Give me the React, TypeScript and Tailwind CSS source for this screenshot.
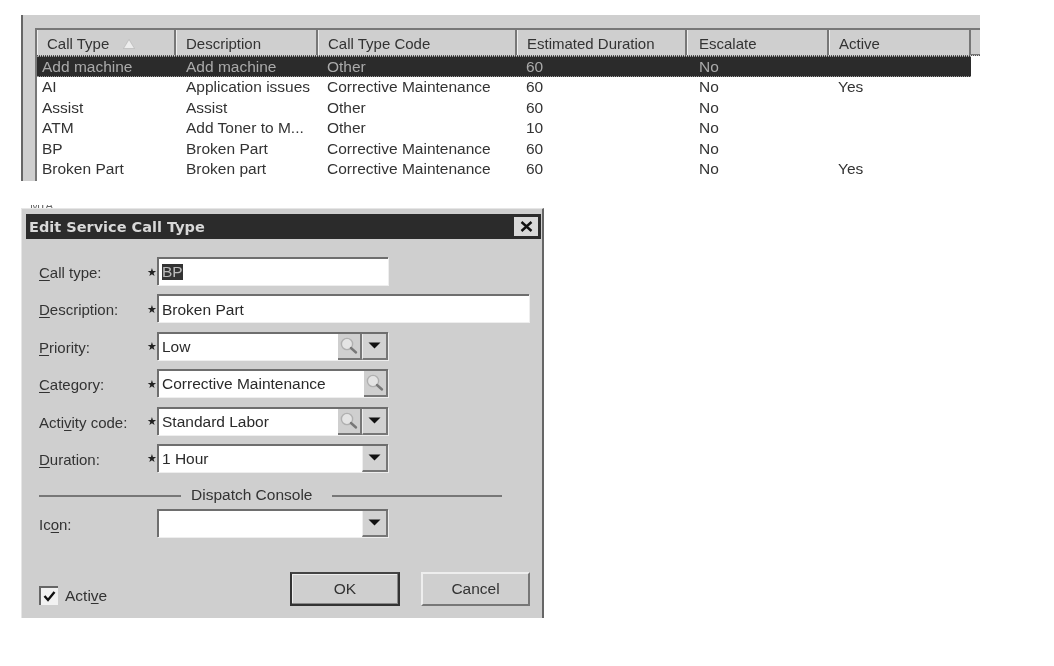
import React from "react";

const cols = ["w-[139px]", "w-[142px]", "w-[199px]", "w-[170px]", "w-[142px]", "w-[142px]"];
const headers = ["Call Type", "Description", "Call Type Code", "Estimated Duration", "Escalate", "Active"];
const rows = [
  ["Add machine", "Add machine", "Other", "60", "No", ""],
  ["AI", "Application issues", "Corrective Maintenance", "60", "No", "Yes"],
  ["Assist", "Assist", "Other", "60", "No", ""],
  ["ATM", "Add Toner to M...", "Other", "10", "No", ""],
  ["BP", "Broken Part", "Corrective Maintenance", "60", "No", ""],
  ["Broken Part", "Broken part", "Corrective Maintenance", "60", "No", "Yes"],
];

function Mnemonic({ pre, u, post }: { pre: string; u: string; post: string }) {
  return (
    <span>
      {pre}
      <span className="underline underline-offset-2">{u}</span>
      {post}
    </span>
  );
}

function SearchBtn() {
  return (
    <div className="w-[24px] h-full bg-[#cfcfcf] border-r-2 border-b-2 border-[#777] flex items-center justify-center shrink-0">
      <svg width="20" height="20" viewBox="0 0 20 20">
        <circle cx="8" cy="8" r="5.6" fill="#e4e4e4" stroke="#b0b0b0" strokeWidth="1.4" />
        <path d="M12 12l5 4.5" stroke="#777" strokeWidth="2.4" strokeLinecap="round" />
      </svg>
    </div>
  );
}

function DropBtn() {
  return (
    <div className="w-[26px] h-full bg-[#d2d2d2] border-l border-l-[#eee] border-r-2 border-b-2 border-[#777] flex items-center justify-center shrink-0">
      <svg width="13" height="7" viewBox="0 0 13 7">
        <path d="M0.5 0.5h12L6.5 6.5z" fill="#111" />
      </svg>
    </div>
  );
}

function Field({
  label,
  star = true,
  value,
  width,
  search,
  drop,
  sel,
}: {
  label: React.ReactNode;
  star?: boolean;
  value?: string;
  width: string;
  search?: boolean;
  drop?: boolean;
  sel?: boolean;
}) {
  return (
    <div className="flex items-center h-[28px]">
      <div className="w-[109px] shrink-0 pl-[1px] text-[#333] text-[15px] pt-[3px] whitespace-nowrap">{label}</div>
      <div className="w-[10px] shrink-0 text-[#222] text-[11px] pt-[2px]">{star ? "★" : ""}</div>
      <div className={`${width} h-full flex items-stretch bg-white border-t-2 border-l-2 border-[#6e6e6e] shadow-[1px_1px_0_#eee]`}>
        <div className="flex-1 min-w-0 pl-[3px] flex items-center text-[#2a2a2a] whitespace-nowrap">
          {sel ? <span className="bg-[#333] text-[#bbb] leading-[16px]">{value}</span> : value}
        </div>
        {search && <SearchBtn />}
        {drop && <DropBtn />}
      </div>
    </div>
  );
}

export default function App() {
  return (
    <div
      className="w-[1054px] h-[666px] bg-white overflow-hidden pt-[15px] pl-[21px] text-[15.5px] leading-none text-[#333] blur-[0.7px]"
      style={{ fontFamily: '"Liberation Sans", Arial, sans-serif' }}
    >
      {/* list panel */}
      <div className="w-[959px] h-[166px] bg-[#cfcfcf] border-l-2 border-[#666] pt-[13px] pl-[12px] overflow-hidden">
        <div className="border-t-2 border-l-2 border-[#777] bg-white h-full">
          <div className="flex h-[26px] bg-[#cfcfcf] border-b border-dotted border-[#555] text-[15px]">
            {headers.map((h, i) => (
              <div key={h} className={`${cols[i]} shrink-0 h-full border-r-2 border-[#777] border-l border-l-[#eee] pt-[2px] flex items-center gap-[14px] ${i === 4 ? "pl-[11px]" : "pl-[9px]"}`}>
                {h}
                {i === 0 && (
                  <svg width="12" height="10" viewBox="0 0 12 10">
                    <path d="M6 0.5L11.5 9.5H0.5z" fill="#ededed" stroke="#aaa" strokeWidth="0.5" />
                  </svg>
                )}
              </div>
            ))}
            <div className="flex-1 border-b border-[#777]" />
          </div>
          {rows.map((r, ri) => (
            <div
              key={ri}
              className={`flex h-[20.5px] items-center ${ri === 0 ? "bg-[#2b2b2b] text-[#aaa] w-[934px] border-y border-dotted border-[#999]" : ""}`}
            >
              {r.map((c, i) => (
                <div key={i} className={`${cols[i]} shrink-0 whitespace-nowrap ${i === 0 ? "pl-[5px]" : i === 4 ? "pl-[12px]" : i === 1 ? "pl-[10px]" : "pl-[9px]"}`}>
                  {c}
                </div>
              ))}
            </div>
          ))}
        </div>
      </div>

      {/* clipped line of text behind the dialog */}
      <div className="h-[27px] overflow-hidden flex items-end pl-[9px]">
        <span className="h-[3px] overflow-hidden text-[#666] text-[12px] leading-[3px] tracking-[1px]">MIA</span>
      </div>

      {/* dialog */}
      <div className="w-[523px] h-[410px] bg-[#cfcfcf] border-r-2 border-[#666] border-l border-l-[#e6e6e6] border-t border-t-[#e6e6e6] flex flex-col">
        <div className="mt-[5px] ml-[4px] mr-[1px] h-[25px] shrink-0 bg-[#2b2b2b] flex items-center justify-between pl-[3px] pr-[3px]">
          <span className="text-[#d8d8d8] font-bold text-[14.5px] pt-[2px]" style={{ fontFamily: '"DejaVu Sans", sans-serif' }}>
            Edit Service Call Type
          </span>
          <div className="w-[24px] h-[19px] bg-[#d8d8d8] flex items-center justify-center">
            <svg width="13" height="11" viewBox="0 0 13 11">
              <path d="M1.5 1l10 9M11.5 1l-10 9" stroke="#111" strokeWidth="2.4" />
            </svg>
          </div>
        </div>

        <div className="pl-[16px] pt-[18px] flex flex-col gap-[9.4px]">
          <Field label={<Mnemonic pre="" u="C" post="all type:" />} value="BP" width="w-[231px]" sel />
          <Field label={<Mnemonic pre="" u="D" post="escription:" />} value="Broken Part" width="w-[372px]" />
          <Field label={<Mnemonic pre="" u="P" post="riority:" />} value="Low" width="w-[231px]" search drop />
          <Field label={<Mnemonic pre="" u="C" post="ategory:" />} value="Corrective Maintenance" width="w-[231px]" search />
          <Field label={<Mnemonic pre="Acti" u="v" post="ity code:" />} value="Standard Labor" width="w-[231px]" search drop />
          <Field label={<Mnemonic pre="" u="D" post="uration:" />} value="1 Hour" width="w-[231px]" drop />
        </div>

        <div className="pl-[17px] h-[37px] w-[480px] shrink-0 flex items-center gap-[10px] pt-[8px]">
          <div className="w-[142px] h-[2px] bg-[#777] mt-[4px]" />
          <span className="whitespace-nowrap">Dispatch Console</span>
          <div className="flex-1 h-[2px] bg-[#777] ml-[10px] mt-[4px]" />
        </div>

        <div className="pl-[16px]">
          <Field label={<Mnemonic pre="Ic" u="o" post="n:" />} star={false} width="w-[231px]" drop />
        </div>

        <div className="flex items-end justify-between pl-[17px] pr-[12px] mt-[35px]">
          <div className="flex items-center gap-[7px] mb-[1px]">
            <div className="w-[19px] h-[19px] bg-[#f2f2f2] border-t-2 border-l-2 border-[#666] flex items-center justify-center">
              <svg width="13" height="11" viewBox="0 0 13 11">
                <path d="M1.5 5l3.5 4 6.5-8" fill="none" stroke="#111" strokeWidth="2.4" />
              </svg>
            </div>
            <Mnemonic pre="Acti" u="v" post="e" />
          </div>
          <div className="flex gap-[21px]">
            <div className="w-[110px] h-[34px] bg-[#cfcfcf] border-2 border-[#333] border-t-[#444] shadow-[inset_-1px_-1px_0_#888,inset_1px_1px_0_#eee] flex items-center justify-center">
              OK
            </div>
            <div className="w-[109px] h-[34px] bg-[#cfcfcf] border-t-2 border-l-2 border-[#eee] border-r-2 border-b-2 border-r-[#777] border-b-[#777] flex items-center justify-center">
              Cancel
            </div>
          </div>
        </div>
      </div>
    </div>
  );
}
